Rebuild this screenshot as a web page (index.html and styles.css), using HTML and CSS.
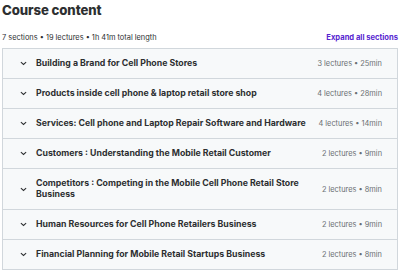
FILE: index.html
```html
<!DOCTYPE html>
<html>
<head>
<meta charset="utf-8">
<link rel="stylesheet" href="styles.css">
</head>
<body>
<div class="wrap">
  <h2 class="title">Course content</h2>
  <div class="meta">
    <span class="meta-text">7 sections • 19 lectures • 1h 41m total length</span>
    <span class="expand">Expand all sections</span>
  </div>
  <div class="list">
    <div class="row"><svg class="chev" viewBox="0 0 8 5"><path d="M1 1l3 2.6L7 1" fill="none" stroke="#2d2f31" stroke-width="1.2"/></svg><span class="name">Building a Brand for Cell Phone Stores</span><span class="info">3 lectures • 25min</span></div>
    <div class="row"><svg class="chev" viewBox="0 0 8 5"><path d="M1 1l3 2.6L7 1" fill="none" stroke="#2d2f31" stroke-width="1.2"/></svg><span class="name">Products inside cell phone &amp; laptop retail store shop</span><span class="info">4 lectures • 28min</span></div>
    <div class="row"><svg class="chev" viewBox="0 0 8 5"><path d="M1 1l3 2.6L7 1" fill="none" stroke="#2d2f31" stroke-width="1.2"/></svg><span class="name">Services: Cell phone and Laptop Repair Software and Hardware</span><span class="info">4 lectures • 14min</span></div>
    <div class="row"><svg class="chev" viewBox="0 0 8 5"><path d="M1 1l3 2.6L7 1" fill="none" stroke="#2d2f31" stroke-width="1.2"/></svg><span class="name">Customers : Understanding the Mobile Retail Customer</span><span class="info">2 lectures • 9min</span></div>
    <div class="row"><svg class="chev" viewBox="0 0 8 5"><path d="M1 1l3 2.6L7 1" fill="none" stroke="#2d2f31" stroke-width="1.2"/></svg><span class="name">Competitors : Competing in the Mobile Cell Phone Retail Store Business</span><span class="info">2 lectures • 8min</span></div>
    <div class="row"><svg class="chev" viewBox="0 0 8 5"><path d="M1 1l3 2.6L7 1" fill="none" stroke="#2d2f31" stroke-width="1.2"/></svg><span class="name">Human Resources for Cell Phone Retailers Business</span><span class="info">2 lectures • 9min</span></div>
    <div class="row"><svg class="chev" viewBox="0 0 8 5"><path d="M1 1l3 2.6L7 1" fill="none" stroke="#2d2f31" stroke-width="1.2"/></svg><span class="name">Financial Planning for Mobile Retail Startups Business</span><span class="info">2 lectures • 8min</span></div>
  </div>
</div>
</body>
</html>
```

FILE: styles.css
```css
* { box-sizing: border-box; }
html, body { margin: 0; padding: 0; background: #fff; }
body { font-family: "Inter", "Noto Sans", sans-serif; color: #2d2f31; }
.wrap { padding: 0 2px 0 2px; }
.title { margin: 0; padding-top: 2px; font-size: 13.2px; line-height: 17px; font-weight: 800; letter-spacing: -0.1px; }
.meta { display: flex; justify-content: space-between; align-items: center; margin-top: 13px; height: 11px; }
.meta-text { font-size: 7.4px; color: #2d2f31; }
.expand { font-size: 7.6px; font-weight: 700; color: #5624d0; }
.list { margin-top: 5px; border: 1px solid #d1d7dc; }
.row { display: flex; align-items: center; background: #f7f9fa; border-top: 1px solid #d1d7dc; padding: 9px 15px 9px 17px; }
.row:first-child { border-top: none; }
.chev { width: 7px; height: 5px; flex: none; margin-right: 9px; }
.name { flex: 1; font-size: 8.75px; line-height: 11px; font-weight: 700; color: #2d2f31; padding-right: 6px; }
.info { flex: none; font-size: 7.4px; line-height: 11px; color: #6a6f73; }
```
